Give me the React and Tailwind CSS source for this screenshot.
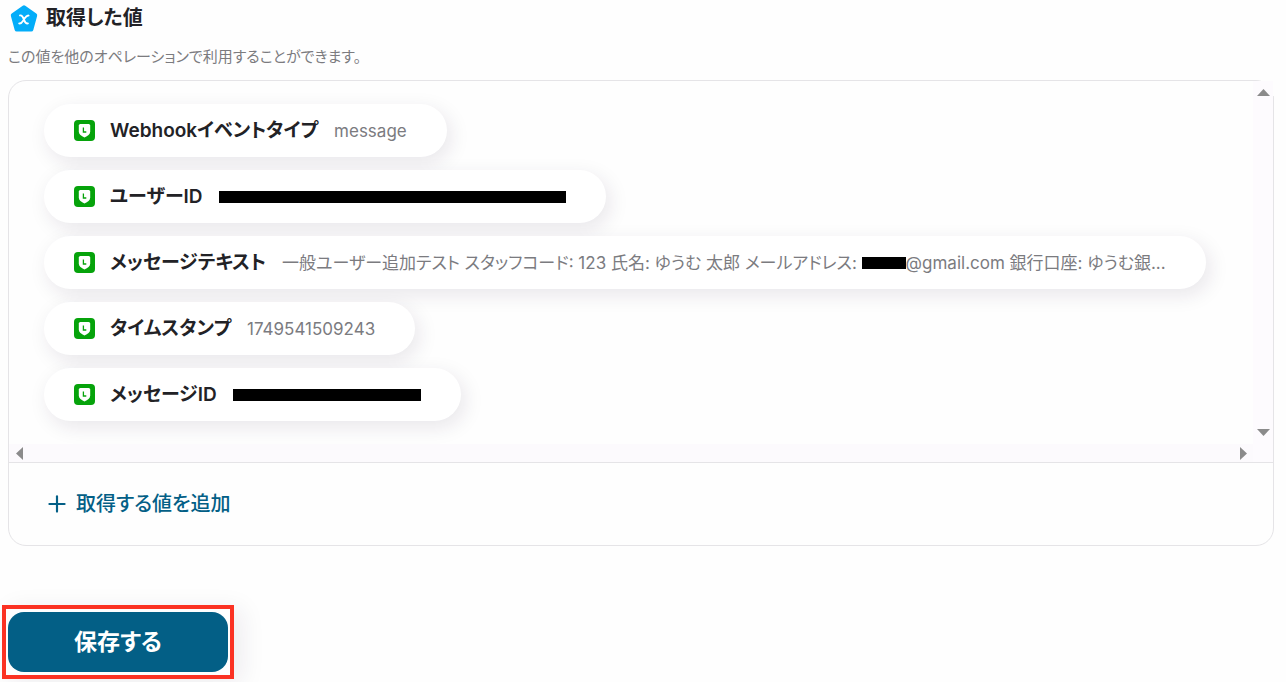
import { Plus } from "lucide-react";

const values = [
  { id: "type", label: "Webhookイベントタイプ", parts: [{ text: "message" }] },
  { id: "user", label: "ユーザーID", parts: [{ mask: "w-[347px]" }] },
  {
    id: "text",
    label: "メッセージテキスト",
    parts: [
      {
        text: "一般ユーザー追加テスト スタッフコード: 123 氏名: ゆうむ 太郎 メールアドレス: ",
      },
      { mask: "w-11" },
      { text: "@gmail.com 銀行口座: ゆうむ銀..." },
    ],
  },
  { id: "time", label: "タイムスタンプ", parts: [{ text: "1749541509243" }] },
  { id: "message", label: "メッセージID", parts: [{ mask: "w-[188px]" }] },
];

const arrows = {
  up: "M0 7 L6.5 0 L13 7 Z",
  down: "M0 0 L6.5 7 L13 0 Z",
  left: "M7 0 L0 6.5 L7 13 Z",
  right: "M0 0 L7 6.5 L0 13 Z",
};

function PentagonIcon() {
  return (
    <svg className="size-7 shrink-0" viewBox="0 0 28 28" aria-hidden="true">
      <path
        d="M14 3.6 L25 11.4 L21.2 25.4 H6.8 L3 11.4 Z"
        fill="#03adf9"
        stroke="#03adf9"
        strokeWidth="4.4"
        strokeLinejoin="round"
      />
      <path
        d="M10 11.4 C12.4 10.8 12.9 13 13.9 15.5 C14.9 18 15.6 20 17.9 19.4 M18.6 11.6 C16.4 11 15.2 13.6 13.9 15.5 C12.6 17.4 11.4 20 9.2 19.4"
        fill="none"
        stroke="#fff"
        strokeWidth="1.9"
        strokeLinecap="round"
      />
    </svg>
  );
}

function LineIcon() {
  return (
    <svg
      className="size-[21px] shrink-0"
      viewBox="0 0 21 21"
      aria-hidden="true"
    >
      <rect width="21" height="21" rx="4" fill="#06a30b" />
      <path
        d="M6.4 4 H14.6 Q16.2 4 16.2 5.6 V11.4 C16.2 14.2 13.8 15.9 10.5 17.4 C7.2 15.9 4.8 14.2 4.8 11.4 V5.6 Q4.8 4 6.4 4 Z"
        fill="#fff"
      />
      <path
        d="M9.4 7.4 V12 H12.3"
        fill="none"
        stroke="#06a30b"
        strokeWidth="1.3"
      />
    </svg>
  );
}

function ArrowButton({ direction, label }) {
  const vertical = direction === "up" || direction === "down";
  return (
    <button type="button" aria-label={label}>
      <svg
        className={vertical ? "h-[7px] w-[13px]" : "h-[13px] w-[7px]"}
        viewBox={vertical ? "0 0 13 7" : "0 0 7 13"}
      >
        <path d={arrows[direction]} fill="#8b8b8b" />
      </svg>
    </button>
  );
}

function ValuePill({ label, parts }) {
  return (
    <li className="flex h-[53px] w-fit max-w-full items-center rounded-full bg-white pr-10 pl-[30px] shadow-[4px_6px_20px_rgba(40,20,60,0.1)]">
      <LineIcon />
      <span className="ml-[15px] shrink-0 text-[19px] leading-7 font-semibold text-[#222226]">
        {label}
      </span>
      <span className="ml-4 flex items-center whitespace-pre text-[17px] leading-6 text-[#7b7b7f]">
        {parts.map((part, index) =>
          part.mask ? (
            <span key={index} className={`h-3 bg-black ${part.mask}`} />
          ) : (
            <span key={index}>{part.text}</span>
          )
        )}
      </span>
    </li>
  );
}

export default function App() {
  return (
    <main className="min-h-screen bg-[#fefefe] pt-1 pb-[3px] font-['Inter','Noto_Sans_CJK_JP',sans-serif] [font-feature-settings:'palt']">
      <div className="pr-3 pl-2">
        <header>
          <div className="flex h-7 items-center gap-2 pl-0.5">
            <PentagonIcon />
            <h1 className="text-[20px] leading-7 font-semibold text-[#222226]">
              取得した値
            </h1>
          </div>
          <p className="mt-[14px] text-[15px] leading-[22px] text-[#7b7b7f]">
            この値を他のオペレーションで利用することができます。
          </p>
        </header>

        <section className="relative mt-3 rounded-[18px] border border-[#e5e4e7]">
          <div className="grid grid-cols-[1fr_20px] border-b border-[#e5e4e7]">
            <ul className="flex min-w-0 flex-col gap-[13px] overflow-hidden rounded-tl-[18px] pt-[23px] pr-8 pb-[23px] pl-[35px]">
              {values.map((value) => (
                <ValuePill key={value.id} {...value} />
              ))}
            </ul>
            <div className="relative z-10 flex flex-col items-center justify-between bg-[#fdfbfe] pt-2 pb-2 leading-none">
              <ArrowButton direction="up" label="上へスクロール" />
              <ArrowButton direction="down" label="下へスクロール" />
            </div>
            <div className="flex h-[18px] items-center justify-between bg-[#fcfafd] pr-[6px] pl-[7px] leading-none">
              <ArrowButton direction="left" label="左へスクロール" />
              <ArrowButton direction="right" label="右へスクロール" />
            </div>
            <div className="bg-[#fdfbfe]" />
          </div>
          {/* the scrollbar track hides the rounded corner */}
          <div className="absolute -top-px -right-px h-4 w-[13px] bg-[#fefefe]" />
          <div className="flex h-[82px] items-center pl-[35px]">
            <button
              type="button"
              className="flex items-center gap-[6px] text-[20px] font-medium text-[#035f86]"
            >
              <Plus className="size-[26px]" strokeWidth={2} />
              取得する値を追加
            </button>
          </div>
        </section>
      </div>

      <div className="mt-[59px] ml-0.5 w-fit border-4 border-[#fb3223] px-0.5 py-[3px] shadow-[8px_4px_24px_rgba(40,20,60,0.08)]">
        <button
          type="button"
          className="flex h-[60px] w-[220px] items-center justify-center rounded-2xl bg-[#035f86] text-[23px] font-bold text-white"
        >
          保存する
        </button>
      </div>
    </main>
  );
}
